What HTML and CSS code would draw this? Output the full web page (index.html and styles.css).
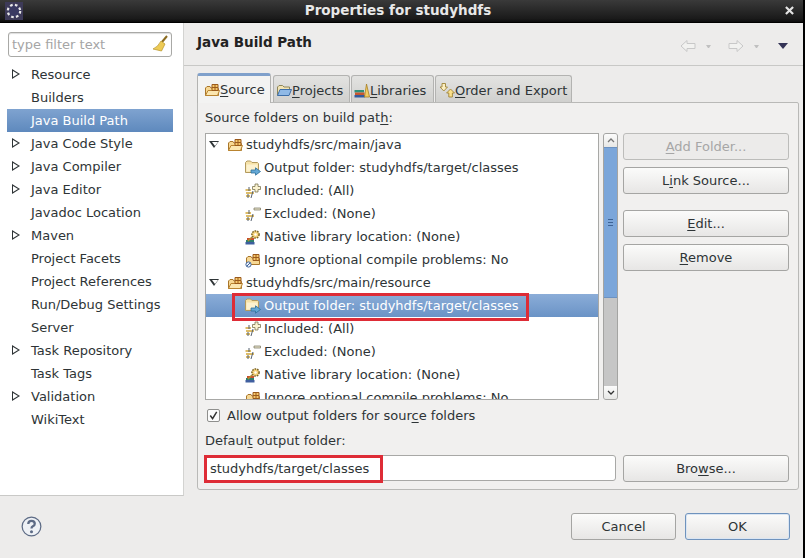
FILE: index.html
```html
<!DOCTYPE html>
<html lang="en">
<head>
<meta charset="utf-8">
<title>Properties for studyhdfs</title>
<link rel="stylesheet" href="styles.css">
</head>
<body>
<svg class="defs" width="0" height="0" aria-hidden="true">
  <defs>
    <symbol id="pkg" viewBox="0 0 16 16">
      <path d="M1.5 13.5 L1.5 6 L3 4.5 L6 4.5 L7 6 L14 6 L14.5 8 L14.5 13.5 Z" fill="#f7d894" stroke="#a9762a"/>
      <path d="M1.5 13.5 L4 8.5 L15.5 8.5 L13.5 13.5 Z" fill="#fbe6b0" stroke="#b98430"/>
      <path d="M8 2.5 H14 V8.5 H8 Z M11 2.5 V8.5 M8 5.5 H14" fill="#f6c86c" stroke="#9a5a1c"/>
    </symbol>
    <symbol id="out" viewBox="0 0 16 16">
      <path d="M0.5 12.5 V2.5 L2 1 H5.5 L7 2.5 H12.5 L13.5 3.5 V12.5 Z" fill="#f6e2a8" stroke="#b39a5e"/>
      <path d="M1.5 4.5 H12.5 V11.5 H1.5 Z" fill="#fdf2cf"/>
      <path d="M6 10 H10.5 V7.8 L15.5 11.5 L10.5 15.2 V13 H6 Z" fill="#64a8d6" stroke="#2f7099" stroke-width=".8"/>
    </symbol>
    <symbol id="inc" viewBox="0 0 16 16">
      <path d="M0.5 7 H6 M1 10 H9 M1 13 H5" stroke="#d2a637" stroke-width="1.3"/>
      <path d="M4 4 V8 M3 11 V15 M8 8 L6 15" stroke="#55606e" stroke-width="1"/>
      <path d="M10 1 H13 V3.5 H15.5 V6.5 H13 V9 H10 V6.5 H7.5 V3.5 H10 Z" fill="#fbf3d0" stroke="#7b7350" stroke-width=".8"/>
    </symbol>
    <symbol id="exc" viewBox="0 0 16 16">
      <path d="M0.5 7 H6 M1 10 H9 M1 13 H5" stroke="#d2a637" stroke-width="1.3"/>
      <path d="M4 4 V8 M3 11 V15 M8 8 L6 15" stroke="#55606e" stroke-width="1"/>
      <path d="M9 2 H15.5 V4 H9 Z" fill="#e8e4cc" stroke="#77735c" stroke-width=".7"/>
    </symbol>
    <symbol id="nat" viewBox="0 0 16 16">
      <path d="M1 11 H9 V13 H1 Z" fill="#2f7f6b"/>
      <path d="M2 9 H9 V11 H2 Z" fill="#c94f2c"/>
      <path d="M0.5 13 H9.5 V15.5 H0.5 Z" fill="#3f5f9f"/>
      <circle cx="10.5" cy="5.5" r="3.6" fill="#f4d27a" stroke="#7b6326" stroke-width="1.5" stroke-dasharray="1.6 1"/>
      <circle cx="10.5" cy="5.5" r="1.2" fill="#fff"/>
      <path d="M7 8 L3 12" stroke="#b88a2c" stroke-width="1.5"/>
    </symbol>
    <symbol id="ign" viewBox="0 0 16 16">
      <path d="M1.5 12.5 V6 L3 4.5 H6 L7 6 H14 L14.5 8 V12.5 Z" fill="#f7d894" stroke="#a9762a"/>
      <path d="M8 2.5 H14 V8.5 H8 Z M11 2.5 V8.5 M8 5.5 H14" fill="#f6c86c" stroke="#9a5a1c"/>
      <circle cx="3.5" cy="12.5" r="2.6" fill="#eef3fb" stroke="#41659c"/>
      <path d="M1.8 14.2 L5.2 10.8" stroke="#41659c"/>
    </symbol>
    <symbol id="prj" viewBox="0 0 16 16">
      <path d="M1.5 13.5 V5 L3 3.5 H6.5 L8 5 H13.5 V8" fill="#f1e3b4" stroke="#8f8658"/>
      <path d="M1.5 13.5 L4 7.5 H15.5 L13 13.5 Z" fill="#8fb9e6" stroke="#3d6ea8"/>
    </symbol>
    <symbol id="lib" viewBox="0 0 16 16">
      <path d="M0.5 8 H10 V10.5 H0.5 Z" fill="#2f8f78"/>
      <path d="M1 10.5 H10.5 V13 H1 Z" fill="#c7572f"/>
      <path d="M0.5 13 H11 V15.5 H0.5 Z" fill="#345a9c"/>
      <path d="M12.5 2 L15.5 15 H10.5 Z" fill="#f3cd63" stroke="#a77f22" stroke-width=".8"/>
    </symbol>
    <symbol id="ord" viewBox="0 0 16 16">
      <path d="M3 1.5 H6.5 V5 H8.5 L4.8 9 L1 5 H3 Z" fill="#fbeec0" stroke="#9f8438" stroke-width=".9"/>
      <path d="M11.5 7 L15.5 11 H13.4 V15 H9.8 V11 H7.6 Z" fill="#fbe08a" stroke="#9f8438" stroke-width=".9"/>
    </symbol>
  </defs>
</svg>

<div class="window">
  <header class="titlebar">
    <svg class="app-icon" viewBox="0 0 18 18" aria-hidden="true">
      <rect x="0" y="0" width="18" height="18" fill="#3d3a58"/>
      <circle cx="9" cy="9" r="6.2" fill="#3a3a62" stroke="#e8e8e8" stroke-width="2.2" stroke-dasharray="2.6 2.3"/>
    </svg>
    <span class="title-text">Properties for studyhdfs</span>
    <svg class="close-icon" viewBox="0 0 10 10" aria-hidden="true"><path d="M1 1 L9 9 M9 1 L1 9" stroke="#e4e4e4" stroke-width="2.4"/></svg>
  </header>

  <div class="main">
    <aside class="sidebar">
      <div class="filter">
        <span class="filter-text">type filter text</span>
        <svg class="broom" viewBox="0 0 16 18" aria-hidden="true">
          <path d="M15 1 L10 7" stroke="#8a6a20" stroke-width="2"/>
          <path d="M9 6 L13 9 L9.5 16 L1 14 Q6 12 9 6 Z" fill="#eecb55" stroke="#b69326" stroke-width=".7"/>
        </svg>
      </div>
      <ul class="nav">
        <li class="nav-row"><span class="twist"></span>Resource</li>
        <li class="nav-row"><span class="twist-none"></span>Builders</li>
        <li class="nav-row nav-selected"><span class="twist-none"></span>Java Build Path</li>
        <li class="nav-row"><span class="twist"></span>Java Code Style</li>
        <li class="nav-row"><span class="twist"></span>Java Compiler</li>
        <li class="nav-row"><span class="twist"></span>Java Editor</li>
        <li class="nav-row"><span class="twist-none"></span>Javadoc Location</li>
        <li class="nav-row"><span class="twist"></span>Maven</li>
        <li class="nav-row"><span class="twist-none"></span>Project Facets</li>
        <li class="nav-row"><span class="twist-none"></span>Project References</li>
        <li class="nav-row"><span class="twist-none"></span>Run/Debug Settings</li>
        <li class="nav-row"><span class="twist-none"></span>Server</li>
        <li class="nav-row"><span class="twist"></span>Task Repository</li>
        <li class="nav-row"><span class="twist-none"></span>Task Tags</li>
        <li class="nav-row"><span class="twist"></span>Validation</li>
        <li class="nav-row"><span class="twist-none"></span>WikiText</li>
      </ul>
    </aside>

    <section class="content">
      <div class="page-head">
        <h1 class="page-title">Java Build Path</h1>
        <div class="head-tools">
          <svg class="nav-arrow" viewBox="0 0 16 14" aria-hidden="true"><path d="M1 7 L7 1.5 V4.5 H15 V9.5 H7 V12.5 Z" fill="#f2f2f0" stroke="#c8c8c8"/></svg>
          <span class="mini-drop"></span>
          <svg class="nav-arrow" viewBox="0 0 16 14" aria-hidden="true"><path d="M15 7 L9 1.5 V4.5 H1 V9.5 H9 V12.5 Z" fill="#f2f2f0" stroke="#c8c8c8"/></svg>
          <span class="mini-drop"></span>
          <span class="view-menu"></span>
        </div>
      </div>

      <div class="tabs-wrap">
        <div class="tabs">
          <div class="tab tab-active"><svg class="ico"><use href="#pkg"/></svg><span><u>S</u>ource</span></div>
          <div class="tab tab-projects"><svg class="ico"><use href="#prj"/></svg><span><u>P</u>rojects</span></div>
          <div class="tab tab-libs"><svg class="ico"><use href="#lib"/></svg><span><u>L</u>ibraries</span></div>
          <div class="tab tab-order"><svg class="ico"><use href="#ord"/></svg><span><u>O</u>rder and Export</span></div>
        </div>

        <div class="tab-body">
          <div class="label first-label">Source folders on build pat<u>h</u>:</div>
          <div class="src-area">
            <div class="tree">
              <div class="row row-top"><span class="tree-twist"></span><svg class="ico"><use href="#pkg"/></svg>studyhdfs/src/main/java</div>
              <div class="row row-sub"><svg class="ico"><use href="#out"/></svg>Output folder: studyhdfs/target/classes</div>
              <div class="row row-sub"><svg class="ico"><use href="#inc"/></svg>Included: (All)</div>
              <div class="row row-sub"><svg class="ico"><use href="#exc"/></svg>Excluded: (None)</div>
              <div class="row row-sub"><svg class="ico"><use href="#nat"/></svg>Native library location: (None)</div>
              <div class="row row-sub"><svg class="ico"><use href="#ign"/></svg>Ignore optional compile problems: No</div>
              <div class="row row-top"><span class="tree-twist"></span><svg class="ico"><use href="#pkg"/></svg>studyhdfs/src/main/resource</div>
              <div class="row row-sub row-selected"><svg class="ico"><use href="#out"/></svg>Output folder: studyhdfs/target/classes<span class="mark mark-row"></span></div>
              <div class="row row-sub"><svg class="ico"><use href="#inc"/></svg>Included: (All)</div>
              <div class="row row-sub"><svg class="ico"><use href="#exc"/></svg>Excluded: (None)</div>
              <div class="row row-sub"><svg class="ico"><use href="#nat"/></svg>Native library location: (None)</div>
              <div class="row row-sub"><svg class="ico"><use href="#ign"/></svg>Ignore optional compile problems: No</div>
            </div>
            <div class="scrollbar">
              <div class="sb-btn sb-up"><svg viewBox="0 0 8 5" class="sb-chev" aria-hidden="true"><path d="M1 4 L4 1 L7 4" fill="none" stroke="#777" stroke-width="1.3"/></svg></div>
              <div class="sb-thumb"><span class="grip"></span></div>
              <div class="sb-track"></div>
              <div class="sb-btn sb-down"><svg viewBox="0 0 8 5" class="sb-chev" aria-hidden="true"><path d="M1 1 L4 4 L7 1" fill="none" stroke="#333" stroke-width="1.3"/></svg></div>
            </div>
            <div class="side-btns">
              <div class="btn btn-disabled"><span><u>A</u>dd Folder...</span></div>
              <div class="btn"><span>L<u>i</u>nk Source...</span></div>
              <div class="btn btn-gap"><span><u>E</u>dit...</span></div>
              <div class="btn"><span><u>R</u>emove</span></div>
            </div>
          </div>
          <div class="check-row">
            <span class="checkbox"><svg viewBox="0 0 12 12" aria-hidden="true"><path d="M2.5 6 L5 9.5 L9.5 2" fill="none" stroke="#333" stroke-width="1.6"/></svg></span>
            <span>Allow output folders for sour<u>c</u>e folders</span>
          </div>
          <div class="label out-label">Defaul<u>t</u> output folder:</div>
          <div class="out-row">
            <div class="out-input">studyhdfs/target/classes<span class="mark mark-input"></span></div>
            <div class="btn btn-browse"><span>Bro<u>w</u>se...</span></div>
          </div>
        </div>
      </div>
    </section>
  </div>

  <footer class="footer">
    <svg class="help" viewBox="0 0 22 22" aria-hidden="true">
      <circle cx="11" cy="11" r="9.8" fill="#eef1f5" stroke="#5d6b85" stroke-width="1.3"/>
      <path d="M7.6 8.4 Q7.8 5.2 11 5.2 Q14.4 5.2 14.4 8 Q14.4 9.8 12.4 10.8 Q11 11.5 11 13.2" fill="none" stroke="#5d6b85" stroke-width="2.4"/>
      <circle cx="11" cy="16.4" r="1.6" fill="#5d6b85"/>
    </svg>
    <div class="footer-btns">
      <div class="btn btn-foot"><span>Cancel</span></div>
      <div class="btn btn-foot btn-default"><span>OK</span></div>
    </div>
  </footer>
</div>
</body>
</html>
```
FILE: styles.css
```css
* { box-sizing: border-box; }
html, body { margin: 0; padding: 0; }
body {
  width: 805px;
  height: 558px;
  overflow: hidden;
  background: #000;
  font-family: "DejaVu Sans", sans-serif;
  font-size: 13px;
  color: #2e3436;
}
.defs { display: block; height: 0; }
ul { list-style: none; margin: 0; padding: 0; }
u { text-underline-offset: 2px; }

.window {
  width: 803px;
  height: 558px;
  display: flex;
  flex-direction: column;
  background: #edeceb;
}

.titlebar {
  height: 23px;
  flex: none;
  display: flex;
  align-items: center;
  padding: 0 0 2px 5px;
  background: linear-gradient(#3a3a3a, #1a1a1a 85%, #0c0c0c);
  border-bottom: 1px solid #000;
  color: #e8e8e8;
  position: relative;
}
.app-icon { width: 18px; height: 18px; margin-top: 1px; }
.title-text {
  flex: 1;
  text-align: center;
  font-weight: bold;
  font-size: 13.5px;
  padding-right: 12px;
}
.close-icon { width: 9px; height: 9px; margin-right: 9px; }

.main { flex: 1; display: flex; min-height: 0; }

.sidebar {
  width: 184px;
  flex: none;
  background: #fff;
  border-right: 1px solid #d3d3d1;
  border-bottom: 1px solid #c9c9c7;
  padding: 9px 10px 0 7px;
}
.filter {
  height: 25px;
  margin-left: 1px;
  width: 164px;
  border: 1px solid #a9a9a6;
  border-radius: 3px;
  box-shadow: inset 0 1px 1px #ddd;
  display: flex;
  align-items: center;
  justify-content: space-between;
  padding: 0 3px 1px;
}
.filter-text { color: #a5a5a5; }
.broom { width: 16px; height: 18px; }
.nav { margin-top: 6px; width: 166px; }
.nav-row {
  height: 23px;
  display: flex;
  align-items: center;
  padding-left: 24px;
  position: relative;
  white-space: nowrap;
}
.nav-selected {
  background: linear-gradient(#7fa3d0, #5e89bd);
  color: #fff;
}
.twist {
  position: absolute;
  left: 5px;
  top: 6px;
  width: 0;
  height: 0;
  border-left: 8px solid #2e3436;
  border-top: 5px solid transparent;
  border-bottom: 5px solid transparent;
}
.twist::after {
  content: "";
  position: absolute;
  left: -7px;
  top: -3px;
  width: 0;
  height: 0;
  border-left: 5px solid #fff;
  border-top: 3px solid transparent;
  border-bottom: 3px solid transparent;
}
.twist-none { display: none; }

.content {
  flex: 1;
  min-width: 0;
  display: flex;
  flex-direction: column;
}
.page-head {
  height: 43px;
  flex: none;
  display: flex;
  align-items: center;
  justify-content: space-between;
  padding: 0 15px 4px 13px;
  border-bottom: 1px solid #c8c8c6;
}
.page-title { margin: 0; font-size: 13.5px; font-weight: bold; color: #222; }
.head-tools { display: flex; align-items: center; padding-top: 8px; }
.nav-arrow { width: 16px; height: 14px; }
.mini-drop {
  width: 5px;
  height: 3px;
  margin: 0 17px 0 10px;
  border-left: 2.5px solid transparent;
  border-right: 2.5px solid transparent;
  border-top: 3px solid #c0c0c0;
}
.view-menu {
  width: 0;
  height: 0;
  margin-left: 2px;
  border-left: 5.5px solid transparent;
  border-right: 5.5px solid transparent;
  border-top: 6px solid #343456;
}

.tabs-wrap { padding: 6px 5px 0 13px; flex: 1; display: flex; flex-direction: column; min-height: 0; }
.tabs { height: 30px; display: flex; align-items: flex-end; flex: none; position: relative; z-index: 1; }
.tab {
  height: 27px;
  display: flex;
  align-items: center;
  padding: 2px 0 0 2px;
  background: linear-gradient(#e3e3e1, #d0d0ce);
  border: 1px solid #b3b3b1;
  border-bottom: none;
  border-radius: 3px 3px 0 0;
  white-space: nowrap;
  margin-right: 1px;
}
.tab .ico { margin-right: 0; }
.tab-active {
  height: 30px;
  width: 74px;
  margin-right: 2px;
  padding: 0 0 0 6px;
  background: #f3f3f2;
  border-top: 3px solid #7fa0cb;
  margin-bottom: -1px;
}
.tab-projects { width: 77px; }
.tab-libs { width: 83px; }
.tab-order { width: 137px; padding-left: 3px; }
.ico { width: 16px; height: 16px; flex: none; margin-right: 3px; }

.tab-body {
  flex: 1;
  width: 602px;
  margin-bottom: 6px;
  background: #f1f0ef;
  border: 1px solid #b9b9b7;
  border-radius: 0 2px 3px 3px;
  padding: 5px 8px 0 7px;
}
.label { height: 20px; line-height: 20px; white-space: nowrap; }
.first-label { margin-bottom: 0; }

.src-area { display: flex; height: 267px; margin-top: 5px; }
.tree {
  width: 394px;
  height: 267px;
  flex: none;
  overflow: hidden;
  background: #fff;
  border: 1px solid #a8a8a6;
}
.row {
  height: 23px;
  display: flex;
  align-items: center;
  white-space: nowrap;
  position: relative;
  top: -1px;
}
.row-top { padding-left: 21px; }
.row-sub { padding-left: 39px; }
.tree-twist {
  position: absolute;
  left: 3px;
  top: 8px;
  width: 11px;
  height: 7px;
}
.tree-twist::before {
  content: "";
  position: absolute;
  left: 0;
  top: 0;
  border-left: 5.5px solid transparent;
  border-right: 5.5px solid transparent;
  border-top: 7px solid #2e3436;
}
.tree-twist::after {
  content: "";
  position: absolute;
  left: 2.5px;
  top: 1.3px;
  border-left: 3px solid transparent;
  border-right: 3px solid transparent;
  border-top: 4px solid #fff;
}
.row-selected {
  background: linear-gradient(#8badd8, #6a93c6);
  color: #fff;
}
.mark { position: absolute; border: 3px solid #de2c36; pointer-events: none; }
.mark-row { left: 26px; top: -1px; width: 297px; height: 28px; }

.scrollbar {
  width: 15px;
  flex: none;
  margin-left: 4px;
  display: flex;
  flex-direction: column;
  border: 1px solid #a4a4a2;
  border-radius: 3px;
  background: #c8c8c8;
  overflow: hidden;
}
.sb-btn {
  height: 13px;
  flex: none;
  background: linear-gradient(#fbfbfb, #e8e8e6);
  display: flex;
  align-items: center;
  justify-content: center;
}
.sb-chev { width: 8px; height: 5px; }
.sb-thumb {
  height: 151px;
  background: #7ba6da;
  border-top: 1px solid #6c92c2;
  border-bottom: 1px solid #6c92c2;
  display: flex;
  align-items: center;
  justify-content: center;
  flex: none;
}
.grip {
  width: 5px;
  height: 7px;
  border-top: 1px solid #3d6396;
  border-bottom: 1px solid #3d6396;
  position: relative;
}
.grip::after {
  content: "";
  position: absolute;
  left: 0;
  right: 0;
  top: 2px;
  height: 1px;
  background: #3d6396;
}
.sb-track { flex: 1; background: #c6c6c6; }

.side-btns { margin-left: 5px; flex: none; width: 166px; display: flex; flex-direction: column; }
.btn {
  height: 27px;
  flex: none;
  display: flex;
  align-items: center;
  justify-content: center;
  white-space: nowrap;
  background: linear-gradient(#fbfbfa, #e7e6e5);
  border: 1px solid #a5a5a3;
  border-radius: 3px;
  color: #2e3436;
  margin-bottom: 7px;
}
.btn-disabled { color: #a6a6a6; background: #ecebea; border-color: #bcbcba; }
.btn-gap { margin-top: 9px; }

.check-row { display: flex; align-items: center; margin-top: 5px; height: 20px; white-space: nowrap; }
.checkbox {
  width: 13px;
  height: 13px;
  margin-left: 2px;
  margin-right: 7px;
  border: 1px solid #8f8f8d;
  border-radius: 2px;
  background: #fbfbfb;
  display: flex;
}
.checkbox svg { width: 11px; height: 11px; }
.out-label { margin-top: 6px; }
.out-row { display: flex; align-items: flex-start; margin-top: 4px; }
.out-input {
  width: 411px;
  height: 26px;
  flex: none;
  display: flex;
  align-items: center;
  padding-left: 4px;
  background: #fff;
  border: 1px solid #a8a8a6;
  border-radius: 3px;
  position: relative;
  white-space: nowrap;
}
.mark-input { left: -2px; top: -1px; width: 179px; height: 28px; }
.btn-browse { width: 166px; margin-left: 7px; }

.footer {
  height: 62px;
  flex: none;
  display: flex;
  align-items: center;
  justify-content: space-between;
  padding: 0 13px 2px 21px;
}
.help { width: 21px; height: 21px; }
.footer-btns { display: flex; gap: 9px; }
.btn-foot { width: 105px; height: 27px; margin: 0; }
.btn-default { border-color: #6f93bd; box-shadow: inset 0 0 0 1px #dbe6f3; }
```
